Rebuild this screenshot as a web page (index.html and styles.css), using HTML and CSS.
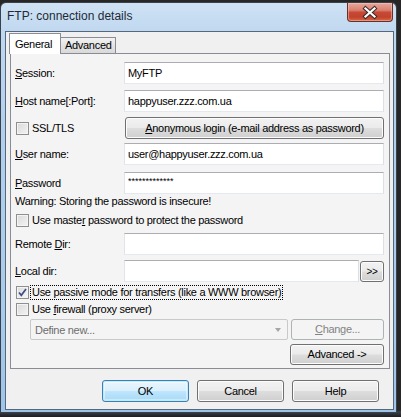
FILE: index.html
```html
<!DOCTYPE html>
<html>
<head>
<meta charset="utf-8">
<title>FTP: connection details</title>
<link rel="stylesheet" href="styles.css">
</head>
<body>
<div class="screen">
  <div class="window">
    <div class="titlebar">
      <span class="title">FTP: connection details</span>
      <div class="close">
        <svg width="44" height="17" viewBox="0 0 44 17">
          <path d="M17.5 4.5 L26.5 12.5 M26.5 4.5 L17.5 12.5" stroke="#3a2a2a" stroke-width="4.2" stroke-linecap="square" fill="none"/>
          <path d="M17.5 4.5 L26.5 12.5 M26.5 4.5 L17.5 12.5" stroke="#ffffff" stroke-width="2.2" stroke-linecap="square" fill="none"/>
        </svg>
      </div>
    </div>
    <div class="client">
      <div class="tabs">
        <div class="tab active">General</div>
        <div class="tab">Advanced</div>
      </div>
      <div class="panel">
        <div class="row r-session">
          <span class="lbl"><span class="ak">S</span>ession:</span>
          <div class="input">MyFTP</div>
        </div>
        <div class="row r-host">
          <span class="lbl"><span class="ak">H</span>ost name[:Port]:</span>
          <div class="input">happyuser.zzz.com.ua</div>
        </div>
        <div class="row r-ssl">
          <span class="lbl check-lbl"><span class="cb"></span><span class="cb-text">SSL/TLS</span></span>
          <div class="btn wide"><span class="ak">A</span>nonymous login (e-mail address as password)</div>
        </div>
        <div class="row r-user">
          <span class="lbl"><span class="ak">U</span>ser name:</span>
          <div class="input">user@happyuser.zzz.com.ua</div>
        </div>
        <div class="row r-pass">
          <span class="lbl"><span class="ak">P</span>assword</span>
          <div class="input pw">*************</div>
        </div>
        <div class="row r-warn">Warning: Storing the password is insecure!</div>
        <div class="row r-master">
          <span class="check-lbl"><span class="cb"></span><span class="cb-text">Use maste<span class="ak">r</span> password to protect the password</span></span>
        </div>
        <div class="row r-remote">
          <span class="lbl">Remote <span class="ak">D</span>ir:</span>
          <div class="input"></div>
        </div>
        <div class="row r-local">
          <span class="lbl"><span class="ak">L</span>ocal dir:</span>
          <div class="input short"></div>
          <div class="btn small">&gt;&gt;</div>
        </div>
        <div class="row r-passive">
          <span class="check-lbl"><span class="cb checked"><svg width="11" height="11" viewBox="0 0 11 11"><path d="M2 5.5 L4.3 8.3 L9 2" stroke="#3d4f86" stroke-width="1.7" fill="none"/></svg></span><span class="cb-text focus">Use passive mode for transfers (like a WWW browser)</span></span>
        </div>
        <div class="row r-firewall">
          <span class="check-lbl"><span class="cb"></span><span class="cb-text">Use <span class="ak">f</span>irewall (proxy server)</span></span>
        </div>
        <div class="row r-combo">
          <div class="combo"><span>Define new...</span><span class="arrow"></span></div>
          <div class="btn disabled change"><span class="ak">C</span>hange...</div>
        </div>
        <div class="row r-adv">
          <div class="btn adv">Advanced -&gt;</div>
        </div>
      </div>
      <div class="footer">
        <div class="btn dlg default">OK</div>
        <div class="btn dlg">Cancel</div>
        <div class="btn dlg">Help</div>
      </div>
    </div>
  </div>
</div>
</body>
</html>
```

FILE: styles.css
```css
* { box-sizing: border-box; }
html, body { margin: 0; padding: 0; }
body {
  background: #1d1d1d;
  font-family: "Liberation Sans", Arial, sans-serif;
  font-size: 11px;
  letter-spacing: -0.3px;
  color: #000;
}
.screen {
  width: 401px;
  height: 417px;
  overflow: hidden;
  padding-top: 2px;
  background: linear-gradient(180deg, #262626 0, #262626 410px, #3a4048 412px, #1a1d22 417px);
}
.window {
  width: 397px;
  height: 411px;
  border: 1px solid #39424c;
  border-radius: 6px 6px 0 0;
  background:
    linear-gradient(180deg, #cfe2f4 0, #c0d8f0 28px, #b2d0ee 120px, #a9cbec 300px, #9fc4ea 411px);
  padding: 0 2px 2px 4px;
  display: flex;
  flex-direction: column;
}
.titlebar {
  height: 28px;
  display: flex;
  align-items: flex-start;
  flex: none;
}
.title {
  margin-left: 2px;
  margin-top: 6px;
  font-family: "Liberation Sans", Arial, sans-serif;
  font-size: 12px;
  letter-spacing: 0;
  line-height: 15px;
  color: #1e2a36;
}
.close {
  margin-left: auto;
  margin-right: 1px;
  width: 46px;
  height: 19px;
  border: 1px solid #6a2e28;
  border-top: none;
  border-radius: 0 0 4px 4px;
  background: linear-gradient(180deg, #e7a89a 0, #d98070 40%, #c74a36 52%, #c2412c 78%, #d36a48 100%);
  box-shadow: inset 0 0 0 1px rgba(255, 210, 200, 0.45);
}
.close svg { display: block; margin-top: 1px; }

.client {
  width: 389px;
  height: 379px;
  border: 1px solid #55687c;
  background: #f0f0f0;
  display: flex;
  flex-direction: column;
}
.tabs {
  display: flex;
  margin-top: 1px;
  padding-left: 3px;
  height: 20px;
  align-items: flex-end;
  position: relative;
  z-index: 1;
}
.tab {
  height: 16px;
  border: 1px solid #898c95;
  border-bottom: none;
  background: linear-gradient(180deg, #f3f3f3 0, #e3e3e3 50%, #d9d9d9 100%);
  padding: 1px 0 0 4px;
  width: 56px;
  margin-left: -1px;
  line-height: 13px;
}
.tab.active {
  height: 21px;
  width: 52px;
  margin-left: 0;
  margin-bottom: -1px;
  background: #ffffff;
  padding: 3px 0 0 5px;
  line-height: 14px;
  border-radius: 1px 1px 0 0;
}
.panel {
  margin-left: 4px;
  width: 380px;
  height: 316px;
  border: 1px solid #898c95;
  background: #f4f4f4;
  padding: 8px 5px 0 4px;
  display: flex;
  flex-direction: column;
}
.row {
  display: flex;
  align-items: center;
  flex: none;
}
.lbl { width: 109px; flex: none; }
.ak { text-decoration: underline; }
.input {
  width: 260px;
  height: 22px;
  border: 1px solid #abadb3;
  border-color: #abadb3 #dbdfe6 #e3e9ef #e2e3ea;
  background: #fff;
  padding: 0 3px;
  line-height: 20px;
  white-space: nowrap;
  overflow: hidden;
}
.input.short { width: 235px; }
.input.pw { font-size: 9px; letter-spacing: 0; line-height: 16px; }

.r-session { height: 22px; }
.r-host { height: 22px; margin-top: 6px; }
.r-ssl { height: 22px; margin-top: 5px; }
.r-user { height: 22px; margin-top: 4px; }
.r-pass { height: 22px; margin-top: 7px; }
.r-warn { height: 14px; }
.r-master { height: 14px; margin-top: 5px; }
.r-remote { height: 22px; margin-top: 6px; }
.r-local { height: 22px; margin-top: 5px; }
.r-passive { height: 16px; margin-top: 2px; }
.r-firewall { height: 16px; margin-top: 1px; }
.r-combo { height: 21px; margin-top: 2px; padding-left: 15px; }
.r-adv { height: 21px; margin-top: 4px; justify-content: flex-end; }

.check-lbl { display: flex; align-items: center; }
.cb {
  width: 13px;
  height: 13px;
  margin-left: 1px;
  border: 1px solid #8e8f8f;
  background: linear-gradient(135deg, #d9d9d9 0, #f4f4f4 100%);
  box-shadow: inset 0 0 0 1px #f4f4f4;
  flex: none;
  display: flex;
  align-items: center;
  justify-content: center;
}
.cb.checked { background: linear-gradient(135deg, #dcdcdc 0, #f7f7f7 100%); }
.cb.checked svg { display: block; }
.cb-text { margin-left: 3px; line-height: 14px; }
.cb-text.focus {
  margin-left: 1px;
  padding: 0 1px;
  border: 1px dotted #000;
  line-height: 13px;
}

.btn {
  height: 21px;
  border: 1px solid #707070;
  border-radius: 3px;
  background: linear-gradient(180deg, #f2f2f2 0, #ebebeb 48%, #dddddd 52%, #cfcfcf 100%);
  box-shadow: inset 0 0 0 1px #fcfcfc;
  display: flex;
  align-items: center;
  justify-content: center;
  flex: none;
  line-height: 13px;
}
.btn.wide { width: 259px; height: 22px; margin-left: 1px; }
.btn.small { width: 24px; height: 21px; margin-left: 1px; font-size: 10px; }
.btn.adv { width: 94px; margin-right: 0; }
.btn.disabled {
  border-color: #adb2b5;
  background: #f4f4f4;
  box-shadow: none;
  color: #838383;
}
.btn.change { width: 93px; margin-left: 3px; }
.combo {
  width: 258px;
  height: 21px;
  border: 1px solid #c9c9c9;
  border-radius: 2px;
  background: #f4f4f4;
  color: #6d6d6d;
  display: flex;
  align-items: center;
  padding-left: 4px;
  padding-right: 6px;
}
.combo .arrow {
  margin-left: auto;
  width: 0;
  height: 0;
  border-left: 3.5px solid transparent;
  border-right: 3.5px solid transparent;
  border-top: 4px solid #a6a6a6;
}
.footer {
  display: flex;
  justify-content: flex-end;
  gap: 8px;
  padding-right: 14px;
  margin-top: 11px;
}
.btn.dlg { width: 87px; height: 22px; }
.btn.default {
  border-color: #3c7fb1;
  background: linear-gradient(180deg, #eaf6fd 0, #d9f0fc 48%, #bee6fd 52%, #a7d9f5 100%);
  box-shadow: inset 0 0 0 1px #c2eaff, inset 0 0 0 2px rgba(255,255,255,0.4);
}
```
